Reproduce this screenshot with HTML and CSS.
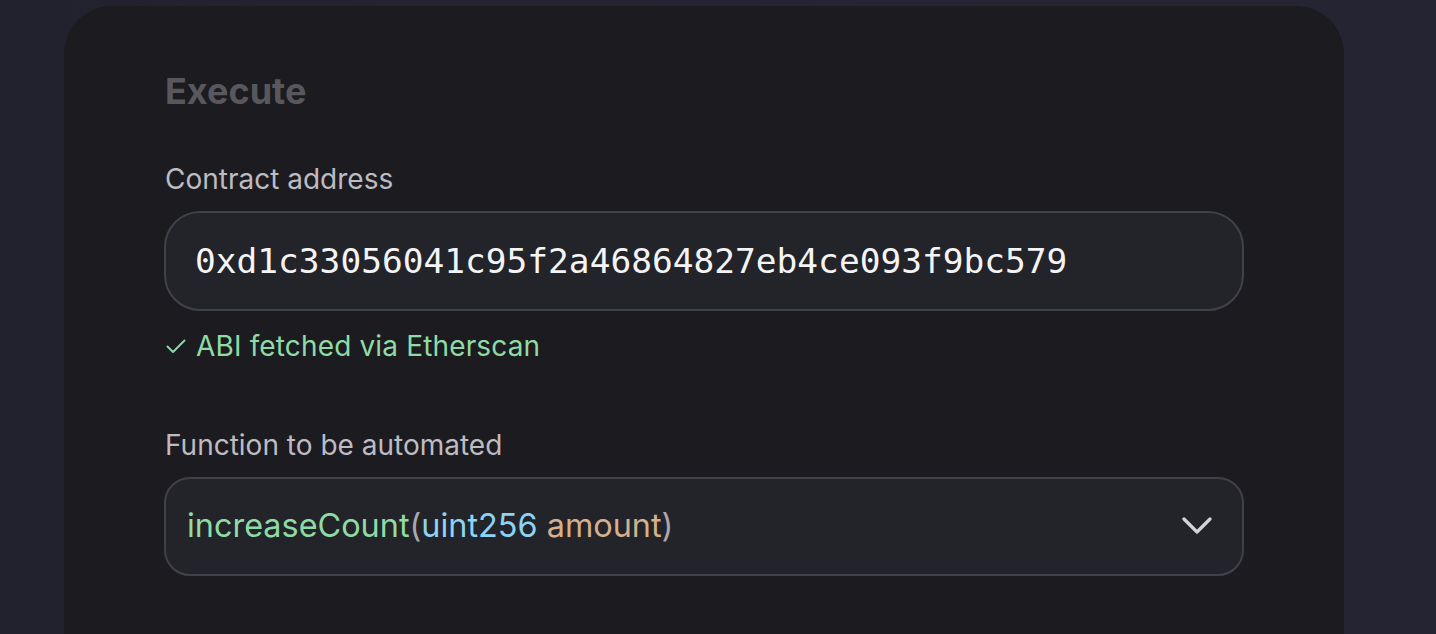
FILE: index.html
```html
<!DOCTYPE html>
<html lang="en">
<head>
<meta charset="utf-8">
<title>Execute</title>
<link rel="stylesheet" href="styles.css">
</head>
<body>
<main class="card">
  <h1 class="title">Execute</h1>
  <label class="label">Contract address</label>
  <div class="input">0xd1c33056041c95f2a46864827eb4ce093f9bc579</div>
  <div class="status">
    <svg class="check" viewBox="0 0 22 22" width="22" height="22"><path d="M2.5 11.5l5.5 5.5L19.5 5.5" fill="none" stroke="currentColor" stroke-width="1.9" stroke-linecap="round" stroke-linejoin="round"/></svg>
    <span>ABI fetched via Etherscan</span>
  </div>
  <label class="label label-fn">Function to be automated</label>
  <div class="select">
    <span class="sig"><span class="fn">increaseCount</span><span class="paren">(</span><span class="type">uint256</span> <span class="arg">amount</span><span class="paren">)</span></span>
    <svg class="chevron" viewBox="0 0 30 18" width="30" height="18"><path d="M2 2l13 13L28 2" fill="none" stroke="currentColor" stroke-width="3.2" stroke-linecap="round" stroke-linejoin="round"/></svg>
  </div>
</main>
</body>
</html>
```
FILE: styles.css
```css
html, body {
  margin: 0;
  padding: 0;
  height: 100%;
  overflow: hidden;
}
body {
  background: linear-gradient(90deg, #22222f 0%, #252434 60%, #252433 100%);
  font-family: "Inter", "Noto Sans", sans-serif;
  padding-top: 6px;
  box-sizing: border-box;
}
.card {
  margin-left: 64px;
  width: 1280px;
  min-height: 700px;
  box-sizing: border-box;
  background: #1c1b20;
  border-radius: 48px 48px 0 0;
  padding: 63px 100px 0 100px;
  display: flex;
  flex-direction: column;
}
.title {
  margin: 0 0 48px 1px;
  font-size: 36px;
  line-height: 44px;
  font-weight: 700;
  color: #58575d;
}
.label {
  display: block;
  font-size: 28px;
  line-height: 36px;
  color: #bdbcc2;
  margin: 0 0 14px 1px;
}
.label-fn {
  margin-top: 63px;
}
.input {
  width: 1080px;
  height: 100px;
  box-sizing: border-box;
  border: 2px solid #414149;
  border-radius: 36px;
  background: #232429;
  display: flex;
  align-items: center;
  padding-left: 29px;
  font-family: "DejaVu Sans Mono", monospace;
  font-size: 34.5px;
  color: #f4f4f6;
}
.status {
  margin-top: 17px;
  display: flex;
  align-items: center;
  gap: 9px;
  font-size: 28px;
  line-height: 36px;
  letter-spacing: 0.15px;
  color: #8fdba6;
  padding-left: 1px;
}
.check {
  width: 22px;
  height: 22px;
}
.select {
  width: 1080px;
  height: 99px;
  box-sizing: border-box;
  border: 2px solid #414149;
  border-radius: 26px;
  background: #232429;
  display: flex;
  align-items: center;
  justify-content: space-between;
  padding: 0 30px 2px 21px;
  font-size: 32.4px;
}
.fn { color: #8fdba6; }
.paren { color: #a9a8ae; }
.type { color: #8dd3f4; }
.arg { color: #d4b08e; }
.chevron {
  color: #d4d3d8;
  width: 30px;
  height: 18px;
}
```
